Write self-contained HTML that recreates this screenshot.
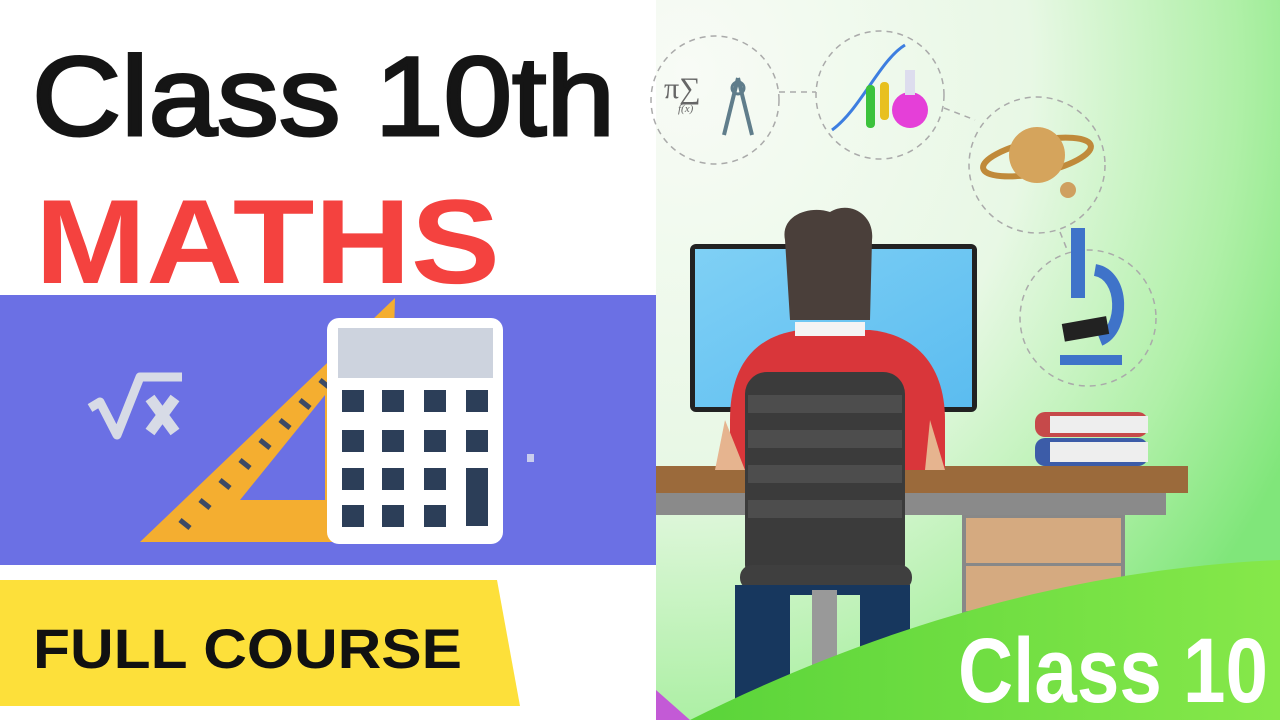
<!DOCTYPE html>
<html><head><meta charset="utf-8"><style>
html,body{margin:0;padding:0;width:1280px;height:720px;overflow:hidden;background:#fff}
svg{display:block}
</style></head><body>
<svg width="1280" height="720" viewBox="0 0 1280 720" xmlns="http://www.w3.org/2000/svg">
<defs>
<radialGradient id="bg" cx="0.05" cy="0.1" r="1.1">
<stop offset="0" stop-color="#f8fbf6"/><stop offset="0.5" stop-color="#e8f8e5"/><stop offset="0.8" stop-color="#b0f0a8"/><stop offset="1" stop-color="#80e67a"/>
</radialGradient>
<linearGradient id="gr" x1="0" y1="0" x2="1" y2="0"><stop offset="0" stop-color="#5ad43a"/><stop offset="1" stop-color="#86e84a"/></linearGradient>
<linearGradient id="scr" x1="0" y1="0" x2="1" y2="1"><stop offset="0" stop-color="#7fd0f5"/><stop offset="1" stop-color="#5bbcf0"/></linearGradient>
</defs>
<rect x="0" y="0" width="656" height="720" fill="#fff"/>
<text x="32" y="135" font-family="Liberation Sans, sans-serif" font-size="112" fill="#151515" stroke="#151515" stroke-width="3" textLength="583" lengthAdjust="spacingAndGlyphs">Class 10th</text>
<text x="35" y="283" font-family="Liberation Sans, sans-serif" font-weight="bold" font-size="120" fill="#f4423f" textLength="465" lengthAdjust="spacingAndGlyphs">MATHS</text>
<rect x="0" y="295" width="656" height="270" fill="#6b70e4"/>
<polygon points="395,298 392,405 340,470 332,522 335,542 140,542" fill="#f4ae30"/>
<polygon points="325,395 325,500 240,500" fill="#6b70e4"/>
<g stroke="#3c4a66" stroke-width="5">
<line x1="180" y1="520" x2="190" y2="528"/><line x1="200" y1="500" x2="210" y2="508"/><line x1="220" y1="480" x2="230" y2="488"/><line x1="240" y1="460" x2="250" y2="468"/><line x1="260" y1="440" x2="270" y2="448"/><line x1="280" y1="420" x2="290" y2="428"/><line x1="300" y1="400" x2="310" y2="408"/><line x1="320" y1="380" x2="330" y2="388"/>
</g>
<path d="M90 408 L100 402 L117 435 L140 377 L182 377" stroke="#d7dbe6" stroke-width="9" fill="none" stroke-linejoin="round"/>
<path d="M150 398 L175 432 M175 398 L150 432" stroke="#d7dbe6" stroke-width="11" fill="none"/>
<rect x="327" y="318" width="176" height="226" rx="12" fill="#fff"/>
<rect x="338" y="328" width="155" height="50" fill="#cdd3de"/>
<g fill="#2c3e58">
<rect x="342" y="390" width="22" height="22"/><rect x="382" y="390" width="22" height="22"/><rect x="424" y="390" width="22" height="22"/><rect x="466" y="390" width="22" height="22"/>
<rect x="342" y="430" width="22" height="22"/><rect x="382" y="430" width="22" height="22"/><rect x="424" y="430" width="22" height="22"/><rect x="466" y="430" width="22" height="22"/>
<rect x="342" y="468" width="22" height="22"/><rect x="382" y="468" width="22" height="22"/><rect x="424" y="468" width="22" height="22"/><rect x="466" y="468" width="22" height="58"/>
<rect x="342" y="505" width="22" height="22"/><rect x="382" y="505" width="22" height="22"/><rect x="424" y="505" width="22" height="22"/>
</g>
<rect x="527" y="454" width="7" height="8" fill="#c9cdee"/>
<polygon points="0,580 497,580 520,706 0,706" fill="#fde03a"/>
<text x="33" y="668" font-family="Liberation Sans, sans-serif" font-weight="bold" font-size="56" fill="#111" textLength="429" lengthAdjust="spacingAndGlyphs">FULL COURSE</text>
<rect x="656" y="0" width="624" height="720" fill="url(#bg)"/>
<g fill="none" stroke="#aaa" stroke-width="1.5" stroke-dasharray="6 5">
<circle cx="715" cy="100" r="64"/><circle cx="880" cy="95" r="64"/><circle cx="1037" cy="165" r="68"/><circle cx="1088" cy="318" r="68"/>
<line x1="779" y1="92" x2="816" y2="92"/><line x1="944" y1="108" x2="975" y2="120"/><line x1="1060" y1="232" x2="1068" y2="252"/>
</g>
<text x="664" y="98" font-family="Liberation Serif, serif" font-size="30" fill="#666">π∑</text>
<text x="678" y="112" font-family="Liberation Serif, serif" font-style="italic" font-size="11" fill="#666">f(x)</text>
<path d="M738 78 L724 135 M738 78 L752 135" stroke="#607d8b" stroke-width="4" fill="none"/><circle cx="738" cy="88" r="6" fill="none" stroke="#607d8b" stroke-width="3"/>
<path d="M832 130 C860 110 880 60 905 45" stroke="#3d7ee0" stroke-width="3" fill="none"/>
<rect x="866" y="85" width="9" height="43" rx="4" fill="#3cc23c"/><rect x="880" y="82" width="9" height="38" rx="4" fill="#e8c020"/>
<circle cx="910" cy="110" r="18" fill="#e53fd8"/><rect x="905" y="70" width="10" height="25" fill="#dde"/>
<ellipse cx="1037" cy="157" rx="55" ry="16" fill="none" stroke="#c08a3a" stroke-width="6" transform="rotate(-12 1037 157)"/>
<circle cx="1037" cy="155" r="28" fill="#d5a45c"/><circle cx="1068" cy="190" r="8" fill="#cfa060"/>
<rect x="1071" y="228" width="14" height="70" fill="#3f73c9"/><path d="M1095 270 C1125 275 1125 330 1100 340" stroke="#3f73c9" stroke-width="12" fill="none"/>
<rect x="1063" y="320" width="45" height="18" fill="#222" transform="rotate(-10 1085 329)"/><rect x="1060" y="355" width="62" height="10" fill="#3f73c9"/>
<rect x="690" y="244" width="287" height="168" rx="6" fill="#222"/>
<rect x="695" y="249" width="277" height="158" fill="url(#scr)"/>
<rect x="1035" y="412" width="113" height="25" rx="10" fill="#c6494a"/><rect x="1050" y="416" width="98" height="17" fill="#eee"/>
<rect x="1035" y="438" width="113" height="28" rx="10" fill="#3c5ca8"/><rect x="1050" y="442" width="98" height="20" fill="#eee"/>
<rect x="656" y="466" width="532" height="27" fill="#9b6a3b"/>
<rect x="656" y="493" width="510" height="22" fill="#8a8a8a"/>
<rect x="962" y="515" width="163" height="100" fill="#888"/>
<rect x="966" y="518" width="155" height="45" fill="#d5aa80"/><rect x="966" y="566" width="155" height="45" fill="#d5aa80"/>
<path d="M730 470 L730 420 C730 360 760 335 800 330 L870 330 C920 335 945 370 945 420 L945 470 Z" fill="#d9363a"/>
<path d="M715 470 L725 420 L745 470 Z" fill="#e6b48f"/><path d="M930 420 L945 470 L925 470 Z" fill="#e6b48f"/>
<rect x="795" y="322" width="70" height="14" fill="#f4f4f4"/>
<path d="M785 240 C780 215 810 205 830 212 C850 200 875 215 872 240 L870 320 L790 320 Z" fill="#4a3f3a"/>
<rect x="745" y="372" width="160" height="215" rx="22" fill="#3b3b3b"/>
<g fill="#4d4d4d"><rect x="748" y="395" width="154" height="18"/><rect x="748" y="430" width="154" height="18"/><rect x="748" y="465" width="154" height="18"/><rect x="748" y="500" width="154" height="18"/></g>
<rect x="740" y="565" width="172" height="25" rx="12" fill="#3f3f3f"/>
<path d="M735 585 L735 700 L790 700 L790 595 L860 595 L860 700 L910 700 L910 585 Z" fill="#17375e"/>
<rect x="812" y="590" width="25" height="100" fill="#999"/>
<path d="M690 720 C850 640 1050 570 1280 560 L1280 720 Z" fill="url(#gr)"/>
<path d="M656 690 L690 720 L656 720 Z" fill="#c35ad6"/>
<text x="958" y="702" font-family="Liberation Sans, sans-serif" font-weight="bold" font-size="92" fill="#fff" textLength="310" lengthAdjust="spacingAndGlyphs">Class 10</text>
</svg>
</body></html>
